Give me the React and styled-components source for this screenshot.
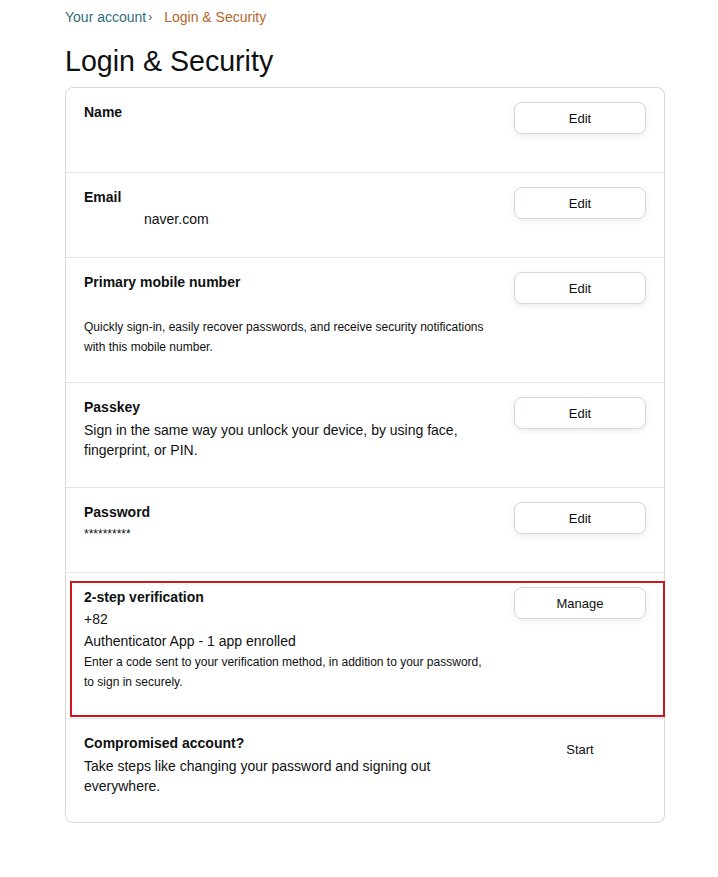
import React from "react";
import styled, { createGlobalStyle } from "styled-components";

const Global = createGlobalStyle`
  html, body { margin: 0; padding: 0; background: #ffffff; }
  body { font-family: "Liberation Sans", Arial, sans-serif; color: #0f1111; }
`;

const Page = styled.div`
  width: 600px;
  padding-left: 65px;
  padding-top: 7px;
  padding-bottom: 50px;
`;

const Crumbs = styled.nav`
  display: flex;
  align-items: center;
  font-size: 14px;
  line-height: 20px;
  height: 20px;
`;

const CrumbLink = styled.span`
  color: #2d6f7c;
`;

const CrumbSep = styled.span`
  color: #555;
  font-size: 12px;
  margin: 0 12px 0 2px;
`;

const CrumbCurrent = styled.span`
  color: #b5662c;
`;

const Title = styled.h1`
  margin: 16px 0 8px;
  font-size: 28.6px;
  line-height: 36px;
  font-weight: 400;
  color: #0f1111;
`;

const Card = styled.section`
  border: 1px solid #d5d9d9;
  border-radius: 8px;
`;

const Row = styled.div`
  position: relative;
  display: flex;
  justify-content: space-between;
  align-items: flex-start;
  padding: 13px 18px ${(p) => p.$pb || 27}px 18px;
  border-bottom: ${(p) => (p.$last ? "none" : "1px solid #e3e6e6")};
`;

const Info = styled.div`
  display: flex;
  flex-direction: column;
  max-width: 405px;
`;

const Label = styled.div`
  font-size: 14px;
  line-height: 22px;
  font-weight: 700;
`;

const Value = styled.div`
  font-size: ${(p) => (p.$small ? 12 : 14)}px;
  line-height: 22px;
  min-height: 22px;
  padding-left: ${(p) => p.$indent || 0}px;
`;

const Desc = styled.div`
  font-size: ${(p) => (p.$large ? 14 : 12)}px;
  line-height: 20px;
  margin-top: ${(p) => p.$mt || 0}px;
`;

const Button = styled.button`
  flex: none;
  width: 132px;
  height: 32px;
  margin-top: 1px;
  border-radius: 8px;
  border: 1px solid ${(p) => (p.$plain ? "transparent" : "#d5d9d9")};
  box-shadow: ${(p) => (p.$plain ? "none" : "0 2px 5px rgba(213, 217, 217, 0.5)")};
  background: #ffffff;
  font-family: inherit;
  font-size: 13px;
  color: #0f1111;
  cursor: pointer;
`;

const Highlight = styled.div`
  position: absolute;
  top: 8px;
  left: 4px;
  right: -1px;
  bottom: 1px;
  border: 2px solid #d3141d;
  pointer-events: none;
`;

export default function App() {
  return (
    <>
      <Global />
      <Page>
        <Crumbs>
          <CrumbLink>Your account</CrumbLink>
          <CrumbSep>›</CrumbSep>
          <CrumbCurrent>Login &amp; Security</CrumbCurrent>
        </Crumbs>
        <Title>Login &amp; Security</Title>
        <Card>
          <Row>
            <Info>
              <Label>Name</Label>
              <Value />
            </Info>
            <Button>Edit</Button>
          </Row>
          <Row>
            <Info>
              <Label>Email</Label>
              <Value $indent={60}>naver.com</Value>
            </Info>
            <Button>Edit</Button>
          </Row>
          <Row $pb={25}>
            <Info>
              <Label>Primary mobile number</Label>
              <Value />
              <Desc $mt={2}>
                Quickly sign-in, easily recover passwords, and receive security notifications
                with this mobile number.
              </Desc>
            </Info>
            <Button>Edit</Button>
          </Row>
          <Row $pb={27}>
            <Info>
              <Label>Passkey</Label>
              <Desc $large $mt={2}>
                Sign in the same way you unlock your device, by using face, fingerprint, or PIN.
              </Desc>
            </Info>
            <Button>Edit</Button>
          </Row>
          <Row>
            <Info>
              <Label>Password</Label>
              <Value $small>**********</Value>
            </Info>
            <Button>Edit</Button>
          </Row>
          <Row $pb={26}>
            <Highlight />
            <Info>
              <Label>2-step verification</Label>
              <Value>+82</Value>
              <Value>Authenticator App - 1 app enrolled</Value>
              <Desc>
                Enter a code sent to your verification method, in addition to your password,
                to sign in securely.
              </Desc>
            </Info>
            <Button>Manage</Button>
          </Row>
          <Row $last $pb={26}>
            <Info>
              <Label>Compromised account?</Label>
              <Desc $large $mt={2}>
                Take steps like changing your password and signing out everywhere.
              </Desc>
            </Info>
            <Button $plain>Start</Button>
          </Row>
        </Card>
      </Page>
    </>
  );
}
